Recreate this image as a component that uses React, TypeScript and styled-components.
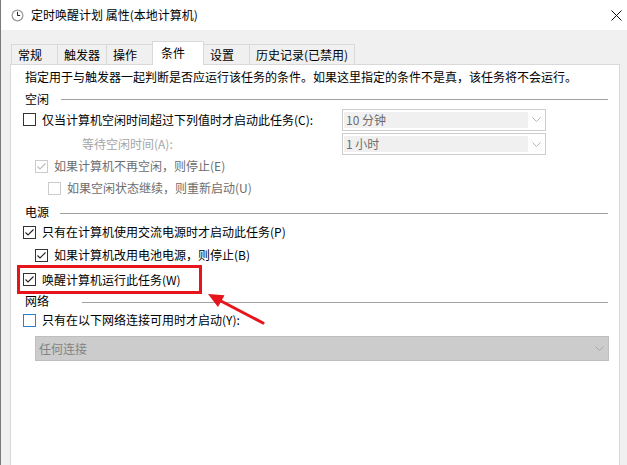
import React from "react";
import styled, { createGlobalStyle } from "styled-components";

const FONT = `"Noto Sans CJK SC", "Noto Sans", sans-serif`;

const Global = createGlobalStyle`
  html, body { margin: 0; padding: 0; background: #ffffff; }
  body { font-family: ${FONT}; font-size: 12px; }
`;

const Window = styled.div`
  position: relative;
  width: 627px;
  height: 465px;
  overflow: hidden;
  box-sizing: border-box;
  border-left: 1px solid #7a7a7a;
  display: flex;
  flex-direction: column;
  font-family: ${FONT};
  font-size: 12px;
  line-height: 16px;
  color: #000;
`;

const TitleBar = styled.div`
  height: 30px;
  flex-shrink: 0;
  background: #ffffff;
  display: flex;
  align-items: center;
  padding-left: 10px;
`;

const TitleText = styled.span`
  margin-left: 7px;
  font-size: 12px;
  color: #000;
  white-space: nowrap;
`;

const CloseGlyph = styled.svg`
  margin-left: auto;
  margin-right: 5px;
  display: block;
`;

const Body = styled.div`
  flex: 1;
  min-height: 0;
  background: #f0f0f0;
  padding: 11px 7px 0 9px;
  display: flex;
  flex-direction: column;
`;

const TabStrip = styled.div`
  display: flex;
  align-items: flex-end;
  height: 24px;
  margin-bottom: -1px;
  padding-left: 1px;
  position: relative;
  z-index: 1;
  flex-shrink: 0;
`;

const Tab = styled.div<{ $active?: boolean }>`
  box-sizing: border-box;
  height: ${(p) => (p.$active ? 24 : 20)}px;
  margin-bottom: ${(p) => (p.$active ? 0 : 1)}px;
  min-width: ${(p) => (p.$active ? 52 : 47)}px;
  padding: 0 ${(p) => (p.$active ? 8 : 6)}px ${(p) => (p.$active ? 2 : 0)}px;
  margin-left: -1px;
  &:first-child { margin-left: 0; }
  border: 1px solid #d9d9d9;
  border-bottom: none;
  background: ${(p) => (p.$active ? "#ffffff" : "#f0f0f0")};
  display: flex;
  align-items: center;
  white-space: nowrap;
  position: relative;
  z-index: ${(p) => (p.$active ? 2 : 1)};
`;

const Panel = styled.div`
  flex: 1;
  background: #ffffff;
  border: 1px solid #d9d9d9;
  border-bottom: none;
  display: flex;
  flex-direction: column;
`;

const Row = styled.div<{ $h: number; $indent: number }>`
  display: flex;
  align-items: center;
  flex-shrink: 0;
  height: ${(p) => p.$h}px;
  padding-left: ${(p) => p.$indent}px;
  padding-right: 11px;
  white-space: nowrap;
`;

const HighlightRow = styled.div`
  box-sizing: border-box;
  display: flex;
  align-items: center;
  flex-shrink: 0;
  align-self: flex-start;
  width: 179px;
  height: 23px;
  margin-left: 9px;
  padding-left: 3px;
  outline: 3px solid #e8141b;
  white-space: nowrap;
`;

const HeadingLabel = styled.span<{ $w: number }>`
  width: ${(p) => p.$w}px;
  flex-shrink: 0;
`;

const Rule = styled.div`
  flex: 1;
  height: 1px;
  background: #a0a0a0;
  margin-top: 2px;
`;

const CheckLabel = styled.span<{ $disabled?: boolean }>`
  margin-left: 6px;
  color: ${(p) => (p.$disabled ? "#6d6d6d" : "#000")};
`;

const LabelCell = styled.div<{ $pad?: number }>`
  width: 319px;
  flex-shrink: 0;
  display: flex;
  align-items: center;
  padding-left: ${(p) => p.$pad || 0}px;
  box-sizing: border-box;
`;

const MutedText = styled.span`
  color: #a6a6a6;
`;

const Combo = styled.div`
  box-sizing: border-box;
  width: 204px;
  height: 22px;
  border: 1px solid #cccccc;
  background: #ffffff;
  display: flex;
  padding: 2px 0 2px 1px;
`;

const ComboField = styled.div`
  flex: 1;
  background: #f0f0f0;
  color: #6d6d6d;
  display: flex;
  align-items: center;
  padding-left: 2px;
`;

const ComboArrow = styled.div`
  width: 17px;
  display: flex;
  align-items: center;
  justify-content: center;
`;

const WideCombo = styled.div`
  box-sizing: border-box;
  flex: 1;
  height: 25px;
  border: 1px solid #bfbfbf;
  background: #cccccc;
  display: flex;
  align-items: center;
  color: #838383;
  padding-left: 3px;
`;

const WideComboText = styled.span`
  flex: 1;
`;

const Overlay = styled.svg`
  position: absolute;
  left: 0;
  top: 0;
  pointer-events: none;
`;

function Chevron({ color }: { color: string }) {
  return (
    <svg width="9" height="5" viewBox="0 0 9 5">
      <polyline points="0.5,0.5 4.5,4.5 8.5,0.5" fill="none" stroke={color} strokeWidth="1" />
    </svg>
  );
}

function CheckBox({
  checked,
  disabled,
  focus,
}: {
  checked?: boolean;
  disabled?: boolean;
  focus?: boolean;
}) {
  const border = disabled ? "#cccccc" : focus ? "#2f7fc6" : "#333333";
  const mark = disabled ? "#bcbcbc" : "#222222";
  return (
    <svg width="13" height="13" viewBox="0 0 13 13" style={{ flexShrink: 0, display: "block" }}>
      <rect x="0.5" y="0.5" width="12" height="12" fill="#ffffff" stroke={border} />
      {checked && (
        <polyline points="2.5,6.5 5,9 10.5,3.5" fill="none" stroke={mark} strokeWidth="1.1" />
      )}
    </svg>
  );
}

function ClockIcon() {
  return (
    <svg width="13" height="13" viewBox="0 0 13 13" style={{ display: "block" }}>
      <circle cx="6.5" cy="6.5" r="6" fill="#9a9a9a" />
      <circle cx="6.5" cy="6.5" r="4.7" fill="#ffffff" />
      <line x1="6.5" y1="6.5" x2="6.5" y2="2.8" stroke="#222" strokeWidth="1" />
      <line x1="6.5" y1="6.5" x2="9.2" y2="6.5" stroke="#222" strokeWidth="1" />
    </svg>
  );
}

const tabs = ["常规", "触发器", "操作", "条件", "设置", "历史记录(已禁用)"];

export default function App() {
  return (
    <>
      <Global />
      <Window>
        <TitleBar>
          <ClockIcon />
          <TitleText>定时唤醒计划 属性(本地计算机)</TitleText>
          <CloseGlyph width="11" height="11" viewBox="0 0 11 11">
            <line x1="0.5" y1="0.5" x2="10.5" y2="10.5" stroke="#111" strokeWidth="1" />
            <line x1="10.5" y1="0.5" x2="0.5" y2="10.5" stroke="#111" strokeWidth="1" />
          </CloseGlyph>
        </TitleBar>
        <Body>
          <TabStrip>
            {tabs.map((t) => (
              <Tab key={t} $active={t === "条件"}>
                {t}
              </Tab>
            ))}
          </TabStrip>
          <Panel>
            <Row $h={23} $indent={14}>
              指定用于与触发器一起判断是否应运行该任务的条件。如果这里指定的条件不是真，该任务将不会运行。
            </Row>
            <Row $h={21} $indent={14}>
              <HeadingLabel $w={36}>空闲</HeadingLabel>
              <Rule />
            </Row>
            <Row $h={21} $indent={12}>
              <LabelCell>
                <CheckBox />
                <CheckLabel>仅当计算机空闲时间超过下列值时才启动此任务(C):</CheckLabel>
              </LabelCell>
              <Combo>
                <ComboField>10 分钟</ComboField>
                <ComboArrow>
                  <Chevron color="#b4b4b4" />
                </ComboArrow>
              </Combo>
            </Row>
            <Row $h={28} $indent={12}>
              <LabelCell $pad={59}>
                <MutedText>等待空闲时间(A):</MutedText>
              </LabelCell>
              <Combo>
                <ComboField>1 小时</ComboField>
                <ComboArrow>
                  <Chevron color="#b4b4b4" />
                </ComboArrow>
              </Combo>
            </Row>
            <Row $h={16} $indent={24}>
              <CheckBox checked disabled />
              <CheckLabel $disabled>如果计算机不再空闲，则停止(E)</CheckLabel>
            </Row>
            <Row $h={28} $indent={37}>
              <CheckBox disabled />
              <CheckLabel $disabled>如果空闲状态继续，则重新启动(U)</CheckLabel>
            </Row>
            <Row $h={20} $indent={14}>
              <HeadingLabel $w={35}>电源</HeadingLabel>
              <Rule />
            </Row>
            <Row $h={20} $indent={12}>
              <CheckBox checked />
              <CheckLabel>只有在计算机使用交流电源时才启动此任务(P)</CheckLabel>
            </Row>
            <Row $h={26} $indent={24}>
              <CheckBox checked />
              <CheckLabel>如果计算机改用电池电源，则停止(B)</CheckLabel>
            </Row>
            <HighlightRow>
              <CheckBox checked />
              <CheckLabel>唤醒计算机运行此任务(W)</CheckLabel>
            </HighlightRow>
            <Row $h={20} $indent={14}>
              <HeadingLabel $w={57}>网络</HeadingLabel>
              <Rule />
            </Row>
            <Row $h={18} $indent={12}>
              <CheckBox focus />
              <CheckLabel>只有在以下网络连接可用时才启动(Y):</CheckLabel>
            </Row>
            <Row $h={32} $indent={24} style={{ paddingRight: 10, alignItems: "flex-end" }}>
              <WideCombo>
                <WideComboText>任何连接</WideComboText>
                <ComboArrow>
                  <Chevron color="#a8a8a8" />
                </ComboArrow>
              </WideCombo>
            </Row>
          </Panel>
        </Body>
        <Overlay width="627" height="465" viewBox="0 0 627 465">
          <line x1="262" y1="323" x2="219" y2="300.5" stroke="#e8141b" strokeWidth="3" strokeLinecap="round" />
          <polygon points="207,294 223.5,295.2 217,307" fill="#e8141b" />
        </Overlay>
      </Window>
    </>
  );
}
